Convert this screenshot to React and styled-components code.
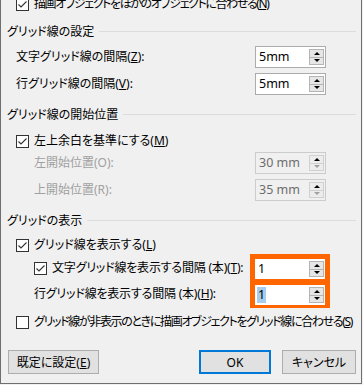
import React from 'react'
import styled, { createGlobalStyle } from 'styled-components'

const GlobalStyle = createGlobalStyle`
  html, body {
    margin: 0;
    padding: 0;
    background: #f0f0f0;
  }
  body {
    font-family: "Noto Sans", "Noto Sans CJK JP", sans-serif;
    font-feature-settings: "palt";
    font-size: 12px;
    color: #000;
  }
`

const Dialog = styled.div`
  box-sizing: border-box;
  width: 362px;
  height: 384px;
  background: #f0f0f0;
  border-left: 1px solid #6f6f6f;
  border-right: 1px solid #6f6f6f;
  border-bottom: 1px solid #6f6f6f;
  padding: 0 5px 0 6px;
  overflow: hidden;
  display: flex;
  flex-direction: column;
`

const Header = styled.div`
  display: flex;
  align-items: center;
  height: 16px;
  margin-top: ${p => p.$mt}px;
  white-space: nowrap;
  &::after {
    content: '';
    flex: 1;
    height: 1px;
    margin-left: 5px;
    background: #dcdcdc;
  }
`

const Row = styled.div`
  display: flex;
  align-items: center;
  justify-content: space-between;
  height: ${p => p.$h || 16}px;
  margin-top: ${p => p.$mt}px;
  padding-left: ${p => p.$indent}px;
  padding-right: 30px;
  white-space: nowrap;
`

const Label = styled.span`
  color: ${p => (p.$disabled ? '#a0a0a0' : '#000')};
  letter-spacing: ${p => p.$ls || 0}px;
  line-height: 16px;
`

const CheckLine = styled.label`
  display: flex;
  align-items: center;
  gap: 5px;
  line-height: 16px;
`

const Box = styled.span`
  box-sizing: border-box;
  width: 13px;
  height: 13px;
  flex: none;
  border: 1px solid #333;
  background: #fff;
  display: flex;
  align-items: center;
  justify-content: center;
`

const Spin = styled.div`
  box-sizing: border-box;
  width: ${p => (p.$bare ? 70 : 71)}px;
  height: ${p => (p.$bare ? 20 : 22)}px;
  border: ${p => (p.$bare ? 'none' : `1px solid ${p.$disabled ? '#cccccc' : '#acacac'}`)};
  background: ${p => (p.$disabled ? '#f0f0f0' : '#fff')};
  display: flex;
  align-items: center;
  justify-content: space-between;
  padding: 0 1px 0 2px;
`

const Value = styled.span`
  font-size: 12.5px;
  color: ${p => (p.$disabled ? '#6d6d6d' : '#000')};
  background: ${p => (p.$selected ? '#a6cdee' : 'transparent')};
  padding: 0 1px;
  line-height: 16px;
`

const Arrows = styled.div`
  display: flex;
  flex-direction: column;
  width: 15px;
  height: 16px;
`

const ArrowBtn = styled.div`
  box-sizing: border-box;
  flex: 1;
  border: 1px solid ${p => (p.$disabled ? '#d0d0d0' : '#b4b4b4')};
  background: ${p => (p.$disabled ? '#ececec' : '#e6e6e6')};
  display: flex;
  align-items: center;
  justify-content: center;
  & + & {
    border-top: none;
  }
  &::before {
    content: '';
    border-left: 3px solid transparent;
    border-right: 3px solid transparent;
    ${p =>
      p.$down
        ? `border-top: 3px solid ${p.$faded ? '#a0a0a0' : '#000'};`
        : `border-bottom: 3px solid #000;`}
  }
`

const Highlight = styled.div`
  display: flex;
  flex-direction: column;
  gap: 6px;
  background: #ff6600;
  padding: 5px 5px 3px 5px;
`

const Labels = styled.div`
  display: flex;
  flex-direction: column;
  padding-top: 6px;
  gap: 10px;
`

const SplitRow = styled.div`
  display: flex;
  align-items: flex-start;
  justify-content: space-between;
  margin-top: 1px;
  padding-left: 27px;
  padding-right: 26px;
  white-space: nowrap;
`

const Buttons = styled.div`
  display: flex;
  gap: 11px;
  margin-top: 20px;
  padding-left: 1px;
`

const Button = styled.button`
  box-sizing: border-box;
  height: 24px;
  width: ${p => p.$w}px;
  margin-right: ${p => p.$gapAfter || 0}px;
  border: ${p => (p.$primary ? '2px solid #0078d7' : '1px solid #adadad')};
  background: #e1e1e1;
  font: inherit;
  color: #000;
  padding: 0;
`

const Check = ({ checked }) => (
  <Box>
    {checked && (
      <svg width="11" height="11" viewBox="0 0 11 11">
        <path d="M1.5 5.5 L4 8 L9.5 2.5" fill="none" stroke="#333" strokeWidth="1.1" />
      </svg>
    )}
  </Box>
)

const CheckItem = ({ checked, ls, children }) => (
  <CheckLine>
    <Check checked={checked} />
    <Label $ls={ls}>{children}</Label>
  </CheckLine>
)

const SpinBox = ({ value, disabled, bare, selected }) => (
  <Spin $disabled={disabled} $bare={bare}>
    <Value $disabled={disabled} $selected={selected}>{value}</Value>
    <Arrows>
      <ArrowBtn $disabled={disabled} />
      <ArrowBtn $disabled={disabled} $down $faded={disabled} />
    </Arrows>
  </Spin>
)

const u = c => <u>{c}</u>

export default function App() {
  return (
    <>
      <GlobalStyle />
      <Dialog>
        <Row $indent={9} $mt={-4}>
          <CheckItem checked ls={-1.4}>
            描画オブジェクトをほかのオブジェクトに合わせる({u('N')})
          </CheckItem>
        </Row>

        <Header $mt={11}>グリッド線の設定</Header>
        <Row $indent={9} $mt={7} $h={22}>
          <Label>文字グリッド線の間隔({u('Z')}):</Label>
          <SpinBox value="5mm" />
        </Row>
        <Row $indent={9} $mt={5} $h={22}>
          <Label>行グリッド線の間隔({u('V')}):</Label>
          <SpinBox value="5mm" />
        </Row>

        <Header $mt={11}>グリッド線の開始位置</Header>
        <Row $indent={9} $mt={11}>
          <CheckItem checked>左上余白を基準にする({u('M')})</CheckItem>
        </Row>
        <Row $indent={27} $mt={3} $h={22}>
          <Label $disabled>左開始位置(O):</Label>
          <SpinBox value="30 mm" disabled />
        </Row>
        <Row $indent={27} $mt={5} $h={22}>
          <Label $disabled>上開始位置(R):</Label>
          <SpinBox value="35 mm" disabled />
        </Row>

        <Header $mt={11}>グリッドの表示</Header>
        <Row $indent={9} $mt={9}>
          <CheckItem checked>グリッド線を表示する({u('L')})</CheckItem>
        </Row>
        <SplitRow>
          <Labels>
            <CheckItem checked ls={-0.2}>
              文字グリッド線を表示する間隔 (本)({u('T')}):
            </CheckItem>
            <Label $ls={-0.2}>行グリッド線を表示する間隔 (本)({u('H')}):</Label>
          </Labels>
          <Highlight>
            <SpinBox value="1" bare />
            <SpinBox value="1" bare selected />
          </Highlight>
        </SplitRow>
        <Row $indent={9} $mt={6}>
          <CheckItem ls={-1.35}>
            グリッド線が非表示のときに描画オブジェクトをグリッド線に合わせる({u('S')})
          </CheckItem>
        </Row>

        <Buttons>
          <Button $w={91} $gapAfter={89}>既定に設定({u('E')})</Button>
          <Button $w={72} $primary>OK</Button>
          <Button $w={74}>キャンセル</Button>
        </Buttons>
      </Dialog>
    </>
  )
}
